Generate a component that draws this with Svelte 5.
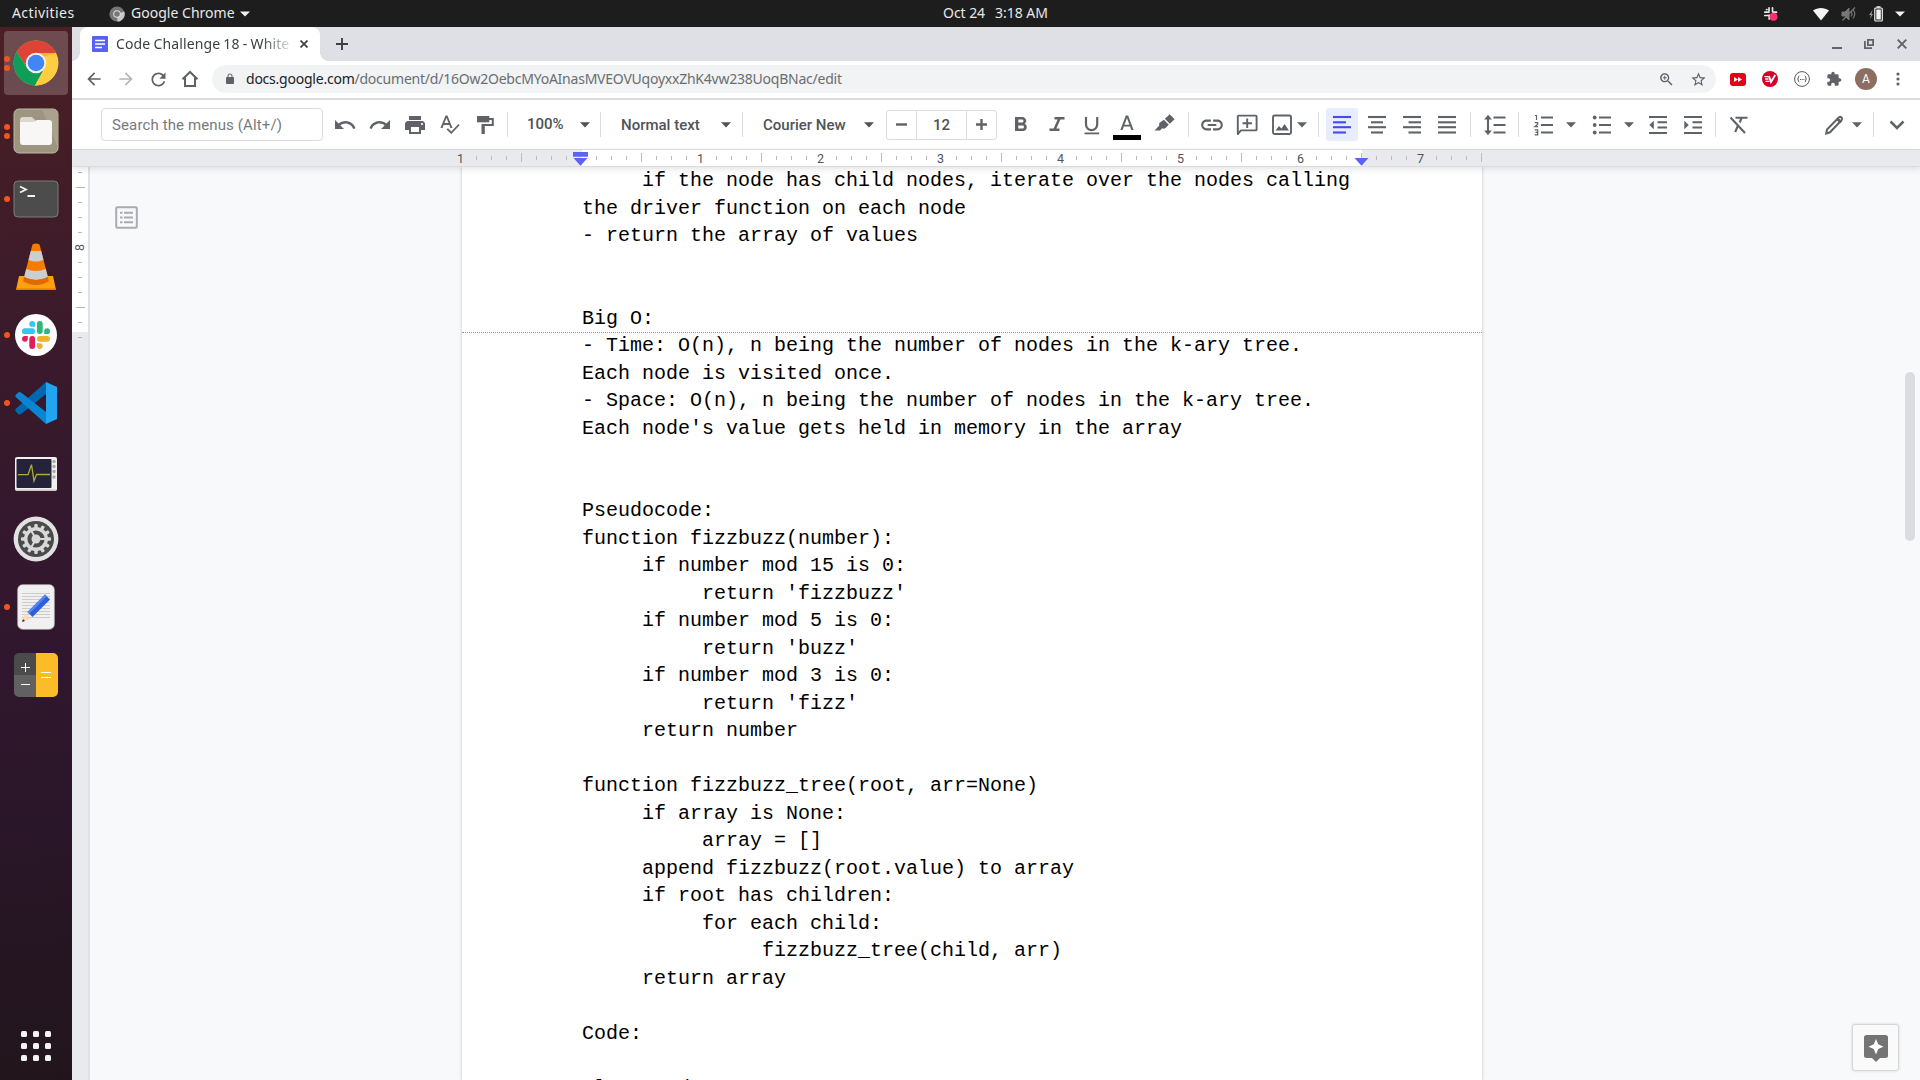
<script>
  const lines = [
    '     if the node has child nodes, iterate over the nodes calling',
    'the driver function on each node',
    '- return the array of values',
    '',
    '',
    'Big O:',
    '- Time: O(n), n being the number of nodes in the k-ary tree.',
    'Each node is visited once.',
    '- Space: O(n), n being the number of nodes in the k-ary tree.',
    "Each node's value gets held in memory in the array",
    '',
    '',
    'Pseudocode:',
    'function fizzbuzz(number):',
    '     if number mod 15 is 0:',
    "          return 'fizzbuzz'",
    '     if number mod 5 is 0:',
    "          return 'buzz'",
    '     if number mod 3 is 0:',
    "          return 'fizz'",
    '     return number',
    '',
    'function fizzbuzz_tree(root, arr=None)',
    '     if array is None:',
    '          array = []',
    '     append fizzbuzz(root.value) to array',
    '     if root has children:',
    '          for each child:',
    '               fizzbuzz_tree(child, arr)',
    '     return array',
    '',
    'Code:',
    '',
    'class Node:',
  ];

  // Horizontal ruler: one cell per eighth of an inch, starting one inch left of the margin.
  const inches = ['1', '', '1', '2', '3', '4', '5', '6', '7'];
  const ticks = Array.from({ length: 69 }, (_, i) => ({
    kind: i % 8 === 0 ? (i === 8 ? 'none' : 'num') : i % 4 === 0 ? 'tall' : 'short',
    label: i % 8 === 0 ? inches[i / 8] : '',
  }));
  const vticks = ['s', 't', 's', 's', 's', '8', 's', 's', 's', 't', 's', 's'];

  const p = {
    undo: 'M12.5 8c-2.65 0-5.05.99-6.9 2.6L2 7v9h9l-3.62-3.62c1.39-1.16 3.16-1.88 5.12-1.88 3.54 0 6.55 2.31 7.6 5.5l2.37-.78C21.08 11.03 17.15 8 12.5 8z',
    redo: 'M18.4 10.6C16.55 8.99 14.15 8 11.5 8c-4.65 0-8.58 3.03-9.96 7.22L3.9 16c1.05-3.19 4.05-5.5 7.6-5.5 1.95 0 3.73.72 5.12 1.88L13 16h9V7l-3.6 3.6z',
    print: 'M19 8H5c-1.66 0-3 1.34-3 3v6h4v4h12v-4h4v-6c0-1.66-1.34-3-3-3zm-3 11H8v-5h8v5zm3-7c-.55 0-1-.45-1-1s.45-1 1-1 1 .45 1 1-.45 1-1 1zm-1-9H6v4h12V3z',
    spell: 'M12.45 15h2.09L9.43 2.5H7.57L2.46 15h2.09l1.12-3h5.64l1.14 3zm-6.02-5L8.5 4.98 10.57 10H6.43zm14 1l-7.2 7.6-3.4-3.4-1.2 1.2 4.6 4.6 8.4-8.8z',
    bold: 'M15.6 10.79c.97-.67 1.65-1.77 1.65-2.79 0-2.26-1.75-4-4-4H6v14h8.04c2.09 0 3.71-1.7 3.71-3.79 0-1.52-.86-2.82-2.15-3.42zM9.3 6.5h3.7c.83 0 1.5.67 1.5 1.5s-.67 1.5-1.5 1.5H9.3v-3zm4.2 9H9.3v-3h4.2c.83 0 1.5.67 1.5 1.5s-.67 1.5-1.5 1.5z',
    link: 'M3.9 12c0-1.71 1.39-3.1 3.1-3.1h4V7H7c-2.76 0-5 2.24-5 5s2.24 5 5 5h4v-1.9H7c-1.71 0-3.1-1.39-3.1-3.1zM8 13h8v-2H8v2zm9-6h-4v1.9h4c1.71 0 3.1 1.39 3.1 3.1s-1.39 3.1-3.1 3.1h-4V17h4c2.76 0 5-2.24 5-5s-2.24-5-5-5z',
    highlight: 'M15.6 3.2l2-2 5 5-4.8 4.6-5-5zM11.8 6.8l5 5-3.3 3.2c-1.3 1-2.5.7-3.3.3L8 17.4H2.5l4.8-5c-.4-1.2-.2-2 .7-2.8z',
    puzzle: 'M20.5 11H19V7c0-1.1-.9-2-2-2h-4V3.5C13 2.12 11.88 1 10.5 1S8 2.12 8 3.5V5H4c-1.1 0-1.99.9-1.99 2v3.8H3.5c1.49 0 2.7 1.21 2.7 2.7s-1.21 2.7-2.7 2.7H2V20c0 1.1.9 2 2 2h3.8v-1.5c0-1.49 1.21-2.7 2.7-2.7 1.49 0 2.7 1.21 2.7 2.7V22H17c1.1 0 2-.9 2-2v-4h1.5c1.38 0 2.5-1.12 2.5-2.5S21.88 11 20.5 11z',
    star: 'M22 9.24l-7.19-.62L12 2 9.19 8.63 2 9.24l5.46 4.73L5.82 21 12 17.27 18.18 21l-1.63-7.03L22 9.24zM12 15.4l-3.76 2.27 1-4.28-3.32-2.88 4.38-.38L12 6.1l1.71 4.04 4.38.38-3.32 2.88 1 4.28L12 15.4z',
    back: 'M20 11H7.83l5.59-5.59L12 4l-8 8 8 8 1.41-1.41L7.83 13H20v-2z',
    fwd: 'M12 4l-1.41 1.41L16.17 11H4v2h12.17l-5.58 5.59L12 20l8-8z',
    reload: 'M17.65 6.35C16.2 4.9 14.21 4 12 4c-4.42 0-7.99 3.58-7.99 8s3.57 8 7.99 8c3.73 0 6.84-2.55 7.73-6h-2.08c-.82 2.33-3.04 4-5.65 4-3.31 0-6-2.69-6-6s2.69-6 6-6c1.66 0 3.14.69 4.22 1.78L13 11h7V4l-2.35 2.35z',
    lock: 'M18 8h-1V6c0-2.76-2.24-5-5-5S7 3.24 7 6v2H6c-1.1 0-2 .9-2 2v10c0 1.1.9 2 2 2h12c1.1 0 2-.9 2-2V10c0-1.1-.9-2-2-2zM9 8V6c0-1.7 1.3-3 3-3s3 1.3 3 3v2z',
    zoom: 'M15.5 14h-.79l-.28-.27C15.41 12.59 16 11.11 16 9.5 16 5.91 13.09 3 9.5 3S3 5.91 3 9.5 5.91 16 9.5 16c1.61 0 3.09-.59 4.23-1.57l.27.28v.79l5 4.99L20.49 19l-4.99-5zm-6 0C7.01 14 5 11.99 5 9.5S7.01 5 9.5 5 14 7.01 14 9.5 11.99 14 9.5 14zM12.2 8.8h-2v-2H8.8v2h-2v1.4h2v2h1.4v-2h2z',
  };
  // Line sets for the alignment icons: [x1, x2] per row.
  const aligns = {
    left: [[3, 21], [3, 16], [3, 21], [3, 16]],
    center: [[3, 21], [6, 18], [3, 21], [6, 18]],
    right: [[3, 21], [8.5, 21], [3, 21], [8.5, 21]],
    justify: [[3, 21], [3, 21], [3, 21], [3, 21]],
  };
  const alignY = [4, 9.3, 14.2, 19.5];
  const teeth = Array.from({ length: 12 }, (_, i) => i * 30);
</script>

{#snippet glyph(d, size)}
  <svg width={size} height={size} viewBox="0 0 24 24" fill="currentColor"><path {d} /></svg>
{/snippet}

{#snippet arrow()}
  <svg class="arrow" width="10" height="6" viewBox="0 0 10 6" fill="currentColor"><path d="M0 .3h10L5 5.5z" /></svg>
{/snippet}

{#snippet align(rows)}
  <svg width="24" height="24" viewBox="0 0 24 24" stroke="currentColor" stroke-width="2.1">
    {#each rows as r, i}<path d="M{r[0]} {alignY[i]}H{r[1]}" />{/each}
  </svg>
{/snippet}

{#snippet slackMark(size)}
  <svg width={size} height={size} viewBox="0 0 28 28">
    <g fill="#36c5f0"><rect x="0" y="7.3" width="13" height="5.8" rx="2.9" /><path d="M10.2 0a2.9 2.9 0 0 1 2.9 2.9v2.9h-2.9a2.9 2.9 0 0 1 0-5.8z" /></g>
    <g fill="#2eb67d"><rect x="14.9" y="0" width="5.8" height="13" rx="2.9" /><path d="M28 10.2a2.9 2.9 0 0 1-2.9 2.9h-2.9v-2.9a2.9 2.9 0 0 1 5.8 0z" /></g>
    <g fill="#ecb22e"><rect x="15" y="14.9" width="13" height="5.8" rx="2.9" /><path d="M17.8 28a2.9 2.9 0 0 1-2.9-2.9v-2.9h2.9a2.9 2.9 0 0 1 0 5.8z" /></g>
    <g fill="#e01e5a"><rect x="7.3" y="15" width="5.8" height="13" rx="2.9" /><path d="M0 17.8a2.9 2.9 0 0 1 2.9-2.9h2.9v2.9a2.9 2.9 0 0 1-5.8 0z" /></g>
  </svg>
{/snippet}

<div class="desktop">
  <header class="topbar">
    <div class="top-left">
      <span class="activities">Activities</span>
      <svg class="mini" width="16" height="16" viewBox="0 0 16 16"><circle cx="8" cy="8" r="7.6" fill="#767676" /><path d="M8 8l7.3-2.5A7.6 7.6 0 0 1 8.5 15.6z" fill="#c9c9c9" /><circle cx="8" cy="8" r="3.8" fill="#ddd" /><circle cx="8" cy="8" r="2.8" fill="#777" /></svg>
      <span class="appname">Google Chrome</span>
      <svg width="10" height="6" viewBox="0 0 10 6"><path d="M0 .5h10L5 5.5z" fill="#f2f2f2" /></svg>
    </div>
    <div class="clock"><span>Oct 24</span><span>3:18 AM</span></div>
    <div class="tray">
      <svg width="16" height="16" viewBox="0 0 16 16"><g stroke="#e8e8e8" stroke-width="1.7" stroke-linecap="round"><path d="M6 1.800v3.200M9.500 1.800v3.700M1.800 6.200h4M1.800 9.500h3.200M6.200 9v4M10 6.200h3.500M3.500 3.500h.5" /></g><circle cx="10.500" cy="10.700" r="4" fill="#ff2e6e" /></svg>
      <svg class="wifi" width="16" height="14" viewBox="0 0 16 14"><path d="M0 3.500C4.500 0 11.500 0 16 3.500L8 13.500z" fill="#f4f4f4" /></svg>
      <svg class="vol" width="16" height="14" viewBox="0 0 16 14" fill="none" stroke="#777"><path d="M1 5h3l4-4v12L4 9H1z" fill="#777" /><path d="M10 4.500q2 2.500 0 5M12 2.500q3.500 4.500 0 9M1.500 13.500L14 .5" stroke-width="1.200" /></svg>
      <svg class="batt" width="14" height="16" viewBox="0 0 14 16"><path d="M3.500 4L0 9h2l-1 4 3-5H2.500z" fill="#999" /><rect x="5.800" y="2" width="7.500" height="13" rx="1" fill="none" stroke="#f2f2f2" stroke-width="1.200" /><path d="M7.300 3.500h4.500v10H7.300zM7.500.3h4v1.500h-4z" fill="#f2f2f2" /></svg>
      <svg class="sys" width="10" height="6" viewBox="0 0 10 6"><path d="M0 .5h10L5 5.500z" fill="#f2f2f2" /></svg>
    </div>
  </header>

  <div class="below">
    <nav class="dock">
      <div class="slot active"><i class="dots"><b></b><b></b></i>
        <svg width="46" height="46" viewBox="0 0 46 46">
          <circle cx="23" cy="23" r="22.400" fill="#fc3" />
          <path d="M3.600 11.800A22.400 22.400 0 0 1 42.400 11.800L42.800 13H23L14.300 28z" fill="#dc4437" />
          <path d="M3.600 11.800A22.400 22.400 0 0 0 22 45.380L31.700 28 23 33 14.300 28z" fill="#0f9d58" />
          <path d="M23 13h19.800A22.400 22.400 0 0 1 22 45.380L31.700 28z" fill="#ffcd40" />
          <path d="M23 13h19.800l-13 4z" fill="#c58a1c" opacity=".35" />
          <circle cx="23" cy="23" r="10.300" fill="#f1f1f1" /><circle cx="23" cy="23" r="8.300" fill="#4285f4" />
        </svg>
      </div>
      <div class="slot"><i class="dots"><b></b><b></b></i>
        <svg width="46" height="46" viewBox="0 0 46 46"><rect x="1" y="1" width="44" height="44" rx="5" fill="#9d957f" stroke="#bfb8a6" /><path d="M29 1h11a5 5 0 0 1 5 5v34z" fill="#aaa28d" /><path d="M7 12a3 3 0 0 1 3-3h9l4 4v8H7z" fill="#dcd8cd" /><path d="M7 14h14l3-2h12a3 3 0 0 1 3 3v19a3 3 0 0 1-3 3H10a3 3 0 0 1-3-3z" fill="#f8f7f5" /></svg>
      </div>
      <div class="slot"><i class="dots"><b></b></i>
        <svg width="46" height="38" viewBox="0 0 46 38"><rect x="1" y="1" width="44" height="36" rx="4" fill="#4c4c4c" stroke="#7b7b7b" /><path d="M7 6.500l6 3-6 3M14.500 16H22" fill="none" stroke="#f2f2f2" stroke-width="1.800" /></svg>
      </div>
      <div class="slot">
        <svg width="46" height="48" viewBox="0 0 46 48">
          <path d="M6 33h34l3 14H3z" fill="#ffa010" /><path d="M3 45.500h40V47H3z" fill="#e77a00" />
          <path d="M19.500 1.500q3.500-2 7 0L36 38q-13 8-26 0z" fill="#f57c00" />
          <path d="M17.800 8h10.400l2.300 9q-7.500 3-15 0zM13.200 26q9.800 4 19.600 0l2 8q-11.800 6-23.600 0z" fill="#c9ced2" />
          <path d="M11.200 34q11.800 6 23.600 0l.9 4.500q-12.700 7-25.400 0z" fill="#e06a00" />
        </svg>
      </div>
      <div class="slot"><i class="dots"><b></b></i><div class="slack">{@render slackMark(28)}</div></div>
      <div class="slot"><i class="dots"><b></b></i>
        <svg width="42" height="42" viewBox="0 0 42 42"><path d="M1.200 26.500L31 0v12L6 32q-1.500 1-2.800 0L.8 29.500q-1.200-1.700.4-3z" fill="#0068b0" /><path d="M1.200 15.500L31 42V30L6 10.500q-1.500-1-2.800 0L.8 12.800q-1.200 1.500.4 2.700z" fill="#0a85d1" /><path d="M31 0l11 5v32l-11 5z" fill="#22a5f1" /></svg>
      </div>
      <div class="slot monitor">
        <svg width="42" height="34" viewBox="0 0 42 34"><rect width="42" height="34" rx="2" fill="#f1f0ee" /><rect x="1.500" y="2" width="35" height="29" rx="1" fill="#25233a" /><path d="M3 17.700h10l3.500-10L19 24l2.500-6.500H35" fill="none" stroke="#b3a541" stroke-width="1.300" /><g fill="#aaa"><circle cx="39" cy="4.500" r="1.700" /><circle cx="39" cy="9.500" r="1.700" /><circle cx="39" cy="14.500" r="1.700" /><circle cx="39" cy="20" r="1.700" /></g><path d="M1 32.500h40V34H1z" fill="#c9c5c3" /></svg>
      </div>
      <div class="slot">
        <svg width="46" height="46" viewBox="-23 -23 46 46"><circle r="22.400" fill="#e2e2e2" /><circle r="18" fill="#4a4b4a" /><g fill="#d8d8d8">{#each teeth as a}<rect x="-1.700" y="-15" width="3.400" height="5" rx="1" transform="rotate({a})" />{/each}</g><circle r="10.300" fill="none" stroke="#d8d8d8" stroke-width="3.400" /><circle r="4.500" fill="#d8d8d8" /><path d="M0 0h10M0 0L-5-8.700M0 0l-5 8.700" stroke="#d8d8d8" stroke-width="2" /></svg>
      </div>
      <div class="slot"><i class="dots"><b></b></i>
        <svg width="38" height="46" viewBox="0 0 38 46"><rect x=".7" y=".7" width="36.600" height="44.600" rx="5" fill="#f0f0f0" stroke="#c9c9c9" stroke-width=".6" /><path d="M5 9.500h28M5 12.500h28M5 15.500h28M5 18.500h28M5 21.500h28M5 24.500h28M5 27.500h28M5 30.500h28M5 33.500h28" stroke="#ccc" /><path d="M5 38l3-9 5.500 5.500z" fill="#fbdcb8" /><path d="M5 38l1-3 2 2z" fill="#333" /><path d="M10.500 28L28 10.500l5 5L15.500 33z" fill="#2c5fdc" /><path d="M10.500 28L28 10.500l1.700 1.700L12 30z" fill="#5487f2" /></svg>
      </div>
      <div class="slot">
        <svg width="46" height="46" viewBox="0 0 46 46"><path d="M6 1h17v22H1V6a5 5 0 0 1 5-5z" fill="#4b4b4b" /><path d="M1 23h22v22H6a5 5 0 0 1-5-5z" fill="#616161" /><path d="M23 1h17a5 5 0 0 1 5 5v34a5 5 0 0 1-5 5H23z" fill="#fcbc28" /><path d="M8 15.500h9M12.500 11v9M8 32.500h9M28 20.500h10M28 25.500h10" stroke="#fff" /></svg>
      </div>
      <svg class="apps" width="32" height="32" viewBox="0 0 32 32" fill="#f2f2f2">{#each [1, 13, 25] as y}{#each [1, 13, 25] as x}<rect {x} {y} width="6" height="6" rx="1.500" />{/each}{/each}</svg>
    </nav>

    <main class="browser">
      <div class="tabstrip">
        <div class="corner left"></div>
        <div class="tab">
          <svg width="16" height="16" viewBox="0 0 16 16"><rect width="16" height="16" rx="1" fill="#5860f8" /><path d="M3 4.500h10M3 8h10M3 11.500h7" stroke="#fff" stroke-width="1.700" /></svg>
          <span class="tabtitle">Code Challenge 18 - White</span>
          <svg class="tabclose" width="8" height="8" viewBox="0 0 8 8"><path d="M.5.5l7 7M7.500.5l-7 7" stroke="#3c4043" stroke-width="1.700" /></svg>
        </div>
        <div class="corner right"></div>
        <svg class="plus" width="12" height="12" viewBox="0 0 12 12"><path d="M6 0v12M0 6h12" stroke="#3c4043" stroke-width="1.900" /></svg>
        <div class="winctl">
          <svg width="10" height="10" viewBox="0 0 10 10"><path d="M0 9h10" stroke="#5f6368" stroke-width="2" /></svg>
          <svg width="10" height="10" viewBox="0 0 10 10" fill="none" stroke="#5f6368" stroke-width="1.800"><path d="M3.900.9h5.200v5.200H3.900zM.9 2v7.100H8" /></svg>
          <svg width="10" height="10" viewBox="0 0 10 10"><path d="M.7.7l8.600 8.600M9.300.7L.7 9.300" stroke="#5f6368" stroke-width="1.900" /></svg>
        </div>
      </div>

      <div class="address">
        <span class="nav">{@render glyph(p.back, 20)}</span>
        <span class="nav dim">{@render glyph(p.fwd, 20)}</span>
        <span class="nav">{@render glyph(p.reload, 21)}</span>
        <span class="nav"><svg width="18" height="18" viewBox="0 0 18 18" fill="none" stroke="currentColor" stroke-width="2"><path d="M1.500 9.300L9 2l7.500 7.300M4 7.500v8.600h10V7.500" /></svg></span>
        <div class="omnibox">
          {@render glyph(p.lock, 12)}
          <span class="url"><b>docs.google.com</b>/document/d/16Ow2OebcMYoAInasMVEOVUqoyxxZhK4vw238UoqBNac/edit</span>
          <span class="nav">{@render glyph(p.zoom, 17)}</span>
          <span class="nav">{@render glyph(p.star, 17)}</span>
        </div>
        <span class="nav"><svg width="16" height="13" viewBox="0 0 16 13"><rect width="16" height="13" rx="3" fill="#e40017" /><path d="M4 4l4 2.500L4 9zM8 4l4 2.500L8 9z" fill="#fff" /></svg></span>
        <span class="nav"><svg width="16" height="16" viewBox="0 0 16 16"><circle cx="8" cy="8" r="8" fill="#d40027" /><path d="M2.500 5.700h4M3 8h3.500M3.500 10.300h4" fill="none" stroke="#fff" stroke-width="1.300" /><path d="M7 5l2 6 4.200-7" fill="none" stroke="#fff" stroke-width="1.900" /></svg></span>
        <span class="nav"><svg width="16" height="16" viewBox="0 0 16 16" fill="none" stroke="#55585c"><circle cx="8" cy="8" r="7.400" /><path d="M5.300 5Q4 5 4.300 7L3.600 8l.7 1Q4 11 5.300 11M10.700 5Q12 5 11.700 7l.7 1-.7 1Q12 11 10.700 11" /><path d="M6 8.500h4.500" stroke-dasharray="1 .7" /></svg></span>
        <span class="nav">{@render glyph(p.puzzle, 16)}</span>
        <span class="nav"><span class="avatar">A</span></span>
        <span class="nav"><svg width="4" height="14" viewBox="0 0 4 14" fill="#5f6368"><circle cx="2" cy="2" r="1.600" /><circle cx="2" cy="7" r="1.600" /><circle cx="2" cy="12" r="1.600" /></svg></span>
      </div>

      <div class="toolbar">
        <div class="search">Search the menus (Alt+/)</div>
        <div class="group first">
          <span>{@render glyph(p.undo, 24)}</span>
          <span>{@render glyph(p.redo, 24)}</span>
          <span>{@render glyph(p.print, 24)}</span>
          <span>{@render glyph(p.spell, 24)}</span>
          <span><svg width="24" height="24" viewBox="0 0 24 24"><path d="M4 3h12.300v6.300H4z" fill="currentColor" /><path d="M16 6h3.800v6H9.500" fill="none" stroke="currentColor" stroke-width="2" /><path d="M8.500 11h3.300v10H8.500z" fill="currentColor" /></svg></span>
        </div>
        <div class="select zoomsel"><span>100%</span>{@render arrow()}</div>
        <div class="select stylesel"><span>Normal text</span>{@render arrow()}</div>
        <div class="select fontsel"><span>Courier New</span>{@render arrow()}</div>
        <div class="sizebox">
          <span><svg width="11" height="11" viewBox="0 0 11 11"><path d="M0 5.500h11" stroke="currentColor" stroke-width="2.400" /></svg></span>
          <span class="num">12</span>
          <span><svg width="11" height="11" viewBox="0 0 11 11"><path d="M0 5.500h11M5.500 0v11" stroke="currentColor" stroke-width="2.400" /></svg></span>
        </div>
        <div class="group format">
          <span>{@render glyph(p.bold, 24)}</span>
          <span><svg width="24" height="24" viewBox="0 0 24 24" fill="none" stroke="currentColor" stroke-width="2.500"><path d="M9.500 5.200h10M4.500 16.800h10M14.600 5.200L9.400 16.800" /></svg></span>
          <span><svg width="24" height="24" viewBox="0 0 24 24" fill="none" stroke="currentColor" stroke-width="2.200"><path d="M6 4v7.500a5.600 5.600 0 0 0 11.200 0V4" /><path d="M4.500 20.400h14.700" stroke-width="1.800" /></svg></span>
          <span><svg width="30" height="30" viewBox="0 0 30 30"><path d="M13.800 5.500L8.300 20h2.300l1.200-3.400h6.300l1.200 3.400h2.300L16.100 5.500zm-1.300 9.200L15 7.900l2.400 6.800z" fill="currentColor" /><path d="M1 25h28v5H1z" fill="#000" /></svg></span>
          <span><svg width="24" height="24" viewBox="0 0 24 24" fill="currentColor"><path d={p.highlight} /></svg></span>
        </div>
        <div class="group insert">
          <span>{@render glyph(p.link, 26)}</span>
          <span><svg width="24" height="24" viewBox="0 0 24 24" fill="none" stroke="currentColor" stroke-width="1.900"><path d="M2.800 21V3.500q0-.9.900-.9h17q.9 0 .9.900v13q0 .9-.9.900H6z" stroke-linejoin="round" /><path d="M12.200 5.500v9.500M7.500 10.200h9.500" /></svg></span>
          <span><svg width="24" height="24" viewBox="0 0 24 24"><rect x="3" y="2.500" width="18" height="18.500" rx="1.500" fill="none" stroke="currentColor" stroke-width="1.900" /><path d="M5.500 17.500l3.500-4.500 2.500 2.500L14.500 11l4.500 6.500z" fill="currentColor" /></svg></span>
          {@render arrow()}
        </div>
        <div class="group aligns">
          <span class="on">{@render align(aligns.left)}</span>
          <span>{@render align(aligns.center)}</span>
          <span>{@render align(aligns.right)}</span>
          <span>{@render align(aligns.justify)}</span>
        </div>
        <div class="group single">
          <span><svg width="24" height="24" viewBox="0 0 24 24" fill="none" stroke="currentColor" stroke-width="2.100"><path d="M10.500 4.500h12M10.500 12h12M10.500 19.500h12M5 4v16" /><path d="M1.200 6.500L5 1.700l3.800 4.800zM1.200 17.500L5 22.300l3.800-4.800z" fill="currentColor" stroke="none" /></svg></span>
        </div>
        <div class="group lists">
          <span><svg width="24" height="24" viewBox="0 0 24 24" fill="none" stroke="currentColor"><path d="M9 4.500h12M9 12h12M9 19.500h12" stroke-width="2.100" /><path d="M3 2.500h1.500v4.500M2.700 9.700h3v1.500l-2.800 2.500h3.100M2.700 16.900h3v5h-3M3.500 19.400h2" stroke-width="1.200" /></svg></span>
          {@render arrow()}
          <span><svg width="24" height="24" viewBox="0 0 24 24" fill="currentColor"><path d="M9 3.500h12v2.100H9zM9 11h12v2.100H9zM9 18.500h12v2.100H9z" /><circle cx="4.700" cy="4.500" r="1.900" /><circle cx="4.700" cy="12" r="1.900" /><circle cx="4.700" cy="19.500" r="1.900" /></svg></span>
          {@render arrow()}
          <span><svg width="24" height="24" viewBox="0 0 24 24"><path d="M3 4h18M11.500 9.300H21M11.500 14.500H21M3 20h18" stroke="currentColor" stroke-width="2.100" /><path d="M3.300 12l4.500-4.200v8.400z" fill="currentColor" /></svg></span>
          <span><svg width="24" height="24" viewBox="0 0 24 24"><path d="M3 4h18M11.500 9.300H21M11.500 14.500H21M3 20h18" stroke="currentColor" stroke-width="2.100" /><path d="M7.800 12L3.300 7.800v8.400z" fill="currentColor" /></svg></span>
        </div>
        <div class="group single clear">
          <span><svg width="24" height="24" viewBox="0 0 24 24" fill="none" stroke="currentColor" stroke-width="2.100"><path d="M8.500 4.800h12M3.500 4.500l14.500 15.500M14.500 5l-1.800 4.500M10.800 13l-2.600 6" /></svg></span>
        </div>
        <div class="group mode">
          <span><svg width="24" height="24" viewBox="0 0 24 24" fill="none" stroke="currentColor" stroke-width="2"><path d="M4.200 20.500l.8-4L17 4.300q1.300-1 2.500.2t.2 2.500L8 19.300z" /><path d="M15 5.500l4 4" stroke-width="3" /></svg></span>
          {@render arrow()}
        </div>
        <div class="group last">
          <span><svg width="16" height="10" viewBox="0 0 16 10" fill="none" stroke="currentColor" stroke-width="2.500"><path d="M1.500 1.500L8 8l6.500-6.500" /></svg></span>
        </div>
      </div>

      <div class="ruler">
        <div class="body-range">
          <svg class="marker start" width="15" height="14" viewBox="0 0 15 14"><path d="M0 0h15v4.700H0zM.5 6h14l-7 7.700z" fill="#5b62fa" /></svg>
          <svg class="marker end" width="15" height="14" viewBox="0 0 15 14"><path d="M.5 6h14l-7 7.700z" fill="#5b62fa" /></svg>
        </div>
        <div class="ticks">{#each ticks as t}<span class={t.kind}>{t.label}</span>{/each}</div>
      </div>

      <div class="workspace">
        <div class="vruler">
          <div class="vrange">{#each vticks as t}<span class="v {t === '8' ? 'n' : t}">{t === '8' ? '8' : ''}</span>{/each}</div>
          <span class="v"></span>
        </div>
        <div class="canvas">
          <div class="outline">
            <svg width="23" height="23" viewBox="0 0 23 23" fill="none" stroke="#a9abae" stroke-width="2"><rect x="1.200" y="1.200" width="20.600" height="20.600" rx="1" /><path d="M9 6.700h9M9 11.500h9M9 16.300h9M5 6.700h2.500M5 11.500h2.500M5 16.300h2.500" stroke-width="2.100" /></svg>
          </div>
          <article class="page">
            {#each lines as line}<div class="line">{line}</div>{/each}
            <div class="pagebreak"></div>
          </article>
          <div class="gutter">
            <div class="scrollthumb"></div>
            <div class="explore"><svg width="24" height="28" viewBox="0 0 24 28"><path d="M2.500 0h19Q24 0 24 2.500v18q0 2.500-2.500 2.500H16l-4 4-4-4H2.500Q0 23 0 20.500v-18Q0 0 2.500 0z" fill="#747474" /><path d="M12 4l2.200 5.300L19.500 11.800l-5.300 2.300L12 19.500l-2.200-5.400-5.300-2.300 5.300-2.500z" fill="#fff" /></svg></div>
          </div>
        </div>
      </div>
    </main>
  </div>
</div>

<style>
  :global(body) { margin: 0; overflow: hidden; }
  .desktop { width: 1920px; height: 1080px; display: flex; flex-direction: column; overflow: hidden; font-family: Roboto, sans-serif; color: #5f6368; }
  .desktop svg { display: block; flex: none; }
  .topbar { height: 27px; flex: none; background: #1d1d1d; display: grid; grid-template-columns: 943px auto 1fr; align-items: center; color: #e8e8e8; font: 14px/25px 'Noto Sans', sans-serif; }
  .topbar span { height: 27px; }
  .top-left { display: flex; align-items: center; padding-left: 12px; white-space: nowrap; }
  .activities { width: 97px; letter-spacing: 0.42px; }
  .appname { width: 104px; margin: 0 5px 0 6px; letter-spacing: 0.02px; }
  .clock { display: flex; gap: 10px; letter-spacing: -0.05px; }
  .tray { display: flex; align-items: center; justify-content: flex-end; padding-right: 15px; }
  .wifi { margin-left: 34px; }
  .vol { margin-left: 12px; }
  .batt { margin-left: 12px; }
  .sys { margin-left: 12px; }

  .below { flex: 1; display: flex; min-height: 0; }
  .dock { width: 72px; flex: none; background: linear-gradient(175deg, #4a2024 0%, #3a1a2b 30%, #32172e 55%, #2a1629 75%, #21151b 100%); display: flex; flex-direction: column; align-items: center; padding-top: 2px; box-sizing: border-box; }
  .slot { width: 64px; height: 64px; margin: 2px 0; border-radius: 4px; display: flex; align-items: center; justify-content: center; position: relative; flex: none; }
  .slot.active { background: rgba(255, 255, 255, 0.2); }
  .slot.monitor { padding-top: 6px; height: 58px; }
  .dots { position: absolute; left: 0; top: 0; height: 100%; display: flex; flex-direction: column; justify-content: center; gap: 3px; }
  .dots b { width: 6px; height: 6px; border-radius: 50%; background: #f0551f; }
  .slack { width: 42px; height: 42px; border-radius: 50%; background: #fff; display: flex; align-items: center; justify-content: center; }
  .apps { margin-top: auto; margin-bottom: 18px; }

  .browser { flex: 1; display: flex; flex-direction: column; min-width: 0; background: #fff; }
  .tabstrip { height: 34px; flex: none; background: #dee0e5; display: flex; align-items: center; }
  .corner { width: 8px; height: 34px; }
  .corner.left { background: radial-gradient(circle at 0 0, transparent 7.5px, #fff 8px) bottom / 8px 8px no-repeat; }
  .corner.right { background: radial-gradient(circle at 100% 0, transparent 7.5px, #fff 8px) bottom / 8px 8px no-repeat; }
  .tab { width: 240px; height: 34px; box-sizing: border-box; background: #fff; border-radius: 8px 8px 0 0; display: flex; align-items: center; padding: 0 12px; }
  .tabtitle { width: 175px; margin-left: 8px; white-space: nowrap; font: 14px/20px 'Noto Sans', sans-serif; letter-spacing: 0.12px; word-spacing: -0.6px; color: #3c4043; mask-image: linear-gradient(90deg, #000 145px, transparent 179px); }
  .tabclose { margin-left: 9px; }
  .plus { margin-left: 8px; }
  .winctl { margin-left: auto; display: flex; gap: 22px; padding-right: 13px; }
  .winctl svg:last-child { margin-left: 1px; }
  .address { height: 36px; flex: none; display: flex; align-items: center; padding: 0 6px 1px; border-bottom: 2px solid #dadce1; box-sizing: content-box; }
  .nav { width: 32px; flex: none; display: flex; justify-content: center; }
  .nav.dim { color: #b5b7ba; }
  .omnibox { width: 1504px; height: 28px; margin: 0 6px; border-radius: 14px; background: #f1f3f4; box-sizing: border-box; display: flex; align-items: center; padding: 0 2px 0 12px; flex: none; }
  .url { flex: 1; margin-left: 10px; font: 14px/20px 'Noto Sans', sans-serif; letter-spacing: -0.23px; color: #6a6d71; white-space: nowrap; }
  .url b { font-weight: 400; color: #202124; }
  .avatar { width: 22px; height: 22px; border-radius: 50%; background: #8d6e63; color: #fff; font-size: 12px; line-height: 22px; text-align: center; }

  .toolbar { height: 49px; flex: none; display: flex; align-items: center; padding-left: 29px; border-bottom: 1px solid #dadce0; }
  .search { width: 222px; height: 33px; box-sizing: border-box; border: 1px solid #dadce0; border-radius: 4px; padding-left: 10px; font-size: 15px; line-height: 32px; letter-spacing: 0.12px; color: #777a7e; }
  .group { display: flex; align-items: center; height: 25px; border-right: 1px solid #dadce0; box-sizing: border-box; flex: none; }
  .group > span { width: 35px; height: 33px; display: flex; align-items: center; justify-content: center; flex: none; }
  .first { width: 185px; padding-left: 4px; }
  .first > span { width: 35.1px; }
  .select { height: 25px; box-sizing: border-box; border-right: 1px solid #dadce0; display: flex; align-items: center; justify-content: space-between; font-size: 15px; font-weight: 500; color: #505357; white-space: nowrap; flex: none; }
  .zoomsel { width: 93px; padding: 0 10px 0 19px; }
  .zoomsel span { margin-top: -2px; }
  .stylesel { width: 142px; padding: 0 11px 0 20px; }
  .fontsel { width: 143px; padding: 0 12px 0 20px; border: 0; }
  .sizebox { width: 111px; height: 30px; box-sizing: border-box; border: 1px solid #dadce0; border-radius: 3px; display: grid; grid-template-columns: 29px 1fr 29px; align-items: stretch; flex: none; }
  .sizebox span { display: flex; align-items: center; justify-content: center; }
  .sizebox .num { border: solid #dadce0; border-width: 0 1px; font-size: 15px; font-weight: 500; color: #505357; padding-top: 1px; }
  .format { width: 192px; padding-left: 6.5px; }
  .format > span { width: 35.4px; }
  .format > span:last-child { width: 38px; }
  .insert { width: 130px; padding-left: 5.5px; }
  .insert .arrow { margin-left: -3px; }
  .aligns { width: 152px; padding-left: 5.5px; }
  .aligns .on { width: 32px; margin: 0 1.5px; background: #e8edfe; border-radius: 3px; color: #4549f5; }
  .single { width: 48px; padding-left: 6px; }
  .lists { width: 197px; padding-left: 7px; }
  .lists .arrow { margin-left: 5px; margin-right: 8px; }
  .lists .arrow ~ .arrow { margin-right: 6px; }
  .clear { border: 0; padding-left: 5px; }
  .mode { margin-left: auto; width: 58px; }
  .mode .arrow { margin-left: 1px; }
  .last { border: 0; width: 46px; padding-left: 5px; }

  .ruler { height: 16px; flex: none; background: #e8eaed; border-bottom: 1px solid #dadce0; position: relative; z-index: 2; box-shadow: 0 2px 6px rgba(60, 64, 67, 0.15); }
  .body-range { width: 780px; height: 16px; margin-left: 510px; background: #fff; position: relative; }
  .marker { position: absolute; top: 2px; z-index: 2; }
  .marker.start { left: -9px; }
  .marker.end { right: -7px; }
  .ticks { position: absolute; left: 381px; top: 0; height: 16px; display: flex; align-items: center; }
  .ticks span { width: 15px; height: 16px; font-size: 12.5px; line-height: 17px; text-align: center; color: #505357; background: linear-gradient(#b9bcc1, #b9bcc1) 8px 6px / 1px 4px no-repeat; }
  .ticks .tall { background-position: 8px 3px; background-size: 1px 9px; }
  .ticks .num, .ticks .none { background: none; }

  .workspace { flex: 1; display: flex; min-height: 0; }
  .vruler { width: 16px; flex: none; background: #e8eaed; border-right: 2px solid #dfe1e4; box-sizing: content-box; display: flex; flex-direction: column; }
  .vrange { height: 165px; background: #fff; display: flex; flex-direction: column; align-items: center; box-sizing: border-box; overflow: hidden; }
  .vrange .v:last-child { height: 0; }
  .vrange + .v { margin-top: 0; }
  .v { width: 16px; height: 15px; flex: none; background: linear-gradient(#b3b6bb, #b3b6bb) center 5px / 4px 1px no-repeat; }
  .v.t { background-size: 9px 1px; }
  .v.n { background: none; font-size: 12.5px; line-height: 16px; text-align: center; writing-mode: vertical-rl; transform: rotate(180deg) translateY(2px); color: #505357; }
  .canvas { flex: 1; display: flex; background: #f8f9fb; min-width: 0; }
  .outline { width: 372px; box-sizing: border-box; padding: 38.5px 0 0 24.5px; flex: none; }
  .page { width: 1020px; flex: none; background: #fff; box-shadow: 0 0 3px rgba(60, 64, 67, 0.3); padding-left: 120px; box-sizing: border-box; position: relative; overflow: hidden; font: 20px/27.5px 'Liberation Mono', monospace; color: #000; }
  .line { height: 27.5px; white-space: pre; }
  .pagebreak { position: absolute; left: 0; right: 0; top: 165px; border-top: 1px dotted #909090; }
  .gutter { flex: 1; display: flex; flex-direction: column; align-items: flex-end; padding: 205px 5px 9px 0; box-sizing: border-box; }
  .scrollthumb { width: 10px; height: 169px; border-radius: 5px; background: #dadce0; }
  .explore { width: 47px; height: 47px; margin-top: auto; margin-right: 16px; box-sizing: border-box; border: 1px solid #d5d7d9; border-radius: 3px; background: #fafafa; display: flex; align-items: center; justify-content: center; padding-top: 2px; box-shadow: 0 0 3px rgba(0, 0, 0, 0.15); }
</style>
